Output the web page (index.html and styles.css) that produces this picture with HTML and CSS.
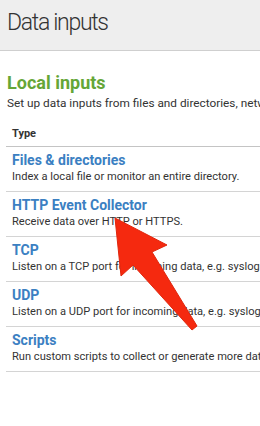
FILE: index.html
```html
<!DOCTYPE html>
<html lang="en">

<head>
    <meta charset="UTF-8">
    <meta name="viewport" content="width=device-width, initial-scale=1.0">
    <title>Data inputs</title>
    <link rel="stylesheet" href="styles.css">
</head>

<body>
    <div class="page-header">
        <h1>Data inputs</h1>
    </div>

    <div class="inputs-section">
        <h2>Local inputs</h2>
        <p class="section-note">Set up data inputs from files and directories, network ports, and scripted inputs.</p>

        <div class="inputs-table">
            <div class="table-head">Type</div>

            <div class="input-row">
                <a href="#" class="input-name">Files &amp; directories</a>
                <p>Index a local file or monitor an entire directory.</p>
            </div>

            <div class="input-row">
                <a href="#" class="input-name">HTTP Event Collector</a>
                <p>Receive data over HTTP or HTTPS.</p>
            </div>

            <div class="input-row">
                <a href="#" class="input-name">TCP</a>
                <p>Listen on a TCP port for incoming data, e.g. syslog.</p>
            </div>

            <div class="input-row">
                <a href="#" class="input-name">UDP</a>
                <p>Listen on a UDP port for incoming data, e.g. syslog.</p>
            </div>

            <div class="input-row">
                <a href="#" class="input-name">Scripts</a>
                <p>Run custom scripts to collect or generate more data.</p>
            </div>
        </div>
    </div>

    <!-- annotation arrow -->
    <svg class="callout-arrow" width="260" height="426" viewBox="0 0 260 426">
        <polygon points="115,218 167,245 152,252 197,326 192,330 133,265 121,276" fill="#f5290f" stroke="#e0260d" stroke-width="1" stroke-linejoin="round"/>
    </svg>
</body>
</html>
```

FILE: styles.css
```css
body {
    font-family: Roboto, 'Liberation Sans', sans-serif;
    margin: 0;
    padding: 0;
    background-color: #fff;
    color: #333;
    width: 260px;
    overflow: hidden;
}

.page-header {
    background-color: #eeeeee;
    border-bottom: 1px solid #cfcfcf;
    height: 50px;
    padding-left: 7px;
}

.page-header h1 {
    margin: 0;
    font-size: 23px;
    font-weight: 300;
    letter-spacing: -1.3px;
    line-height: 46px;
    color: #333;
    white-space: nowrap;
}

.inputs-section {
    padding-top: 21px;
    overflow: hidden;
}

.inputs-section h2 {
    margin: 0 0 0 7px;
    font-size: 18px;
    font-weight: 700;
    line-height: 22px;
    color: #65a637;
    white-space: nowrap;
}

.section-note {
    margin: 2px 0 0 7px;
    font-size: 11.8px;
    line-height: 15px;
    white-space: nowrap;
    overflow: hidden;
}

.inputs-table {
    margin: 16px 0 0 6px;
}

.table-head {
    font-size: 11px;
    font-weight: 700;
    line-height: 14px;
    padding: 0 0 5px 6px;
    border-bottom: 1px solid #c4c4c4;
}

.input-row {
    padding: 5px 0 7px 6px;
    height: 32px;
    border-bottom: 1px solid #d4d4d4;
    white-space: nowrap;
    overflow: hidden;
}

.input-name {
    display: block;
    font-size: 14px;
    font-weight: 700;
    line-height: 17px;
    color: #3b80c2;
    text-decoration: none;
}

.input-row p {
    margin: 0;
    font-size: 11.1px;
    line-height: 15px;
}

.callout-arrow {
    position: absolute;
    left: 0;
    top: 0;
    pointer-events: none;
}
```
